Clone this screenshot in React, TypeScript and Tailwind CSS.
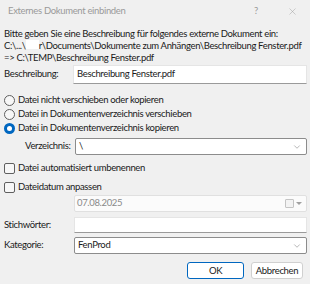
import { ChevronDown, X } from "lucide-react";

function Radio({ checked, label }: { checked?: boolean; label: string }) {
  return (
    <div className="flex h-[14px] items-center gap-[3px]">
      {checked ? (
        <span className="flex h-[11px] w-[11px] items-center justify-center rounded-full bg-[#0067c0]">
          <span className="h-[5px] w-[5px] rounded-full bg-white" />
        </span>
      ) : (
        <span className="h-[11px] w-[11px] rounded-full border border-[#5f5f5f] bg-[#f7f7f7]" />
      )}
      <span>{label}</span>
    </div>
  );
}

function Check({ label }: { label: string }) {
  return (
    <div className="flex h-[14px] items-center gap-[3px]">
      <span className="h-[11px] w-[11px] rounded-[2px] border border-[#5f5f5f] bg-[#f7f7f7]" />
      <span>{label}</span>
    </div>
  );
}

export default function App() {
  return (
    <div className="flex h-[284px] w-[310px] flex-col bg-[#f0f0f0] text-[9.5px] tracking-[-0.34px] text-[#1a1a1a] font-['Lato',sans-serif]">
      <div className="flex h-[22px] items-center pl-[8px] text-[#9a9a9a]">
        <span className="flex-1">Externes Dokument einbinden</span>
        <span className="w-[36px] text-center">?</span>
        <span className="flex w-[36px] justify-center">
          <X size={11} strokeWidth={1} />
        </span>
      </div>

      <div className="flex flex-1 flex-col pl-[4px] pr-[3px]">
        <div className="mt-[6px] leading-[12px]">
          <div className="whitespace-nowrap">Bitte geben Sie eine Beschreibung für folgendes externe Dokument ein:</div>
          <div className="whitespace-nowrap">
            C:\...\<span className="inline-block h-[9px] w-[13px] bg-white" />r\Documents\Dokumente zum Anhängen\Beschreibung Fenster.pdf
          </div>
          <div>=&gt; C:\TEMP\Beschreibung Fenster.pdf</div>
        </div>

        <div className="mt-[1px] flex items-center">
          <span className="w-[69px]">Beschreibung:</span>
          <div className="flex h-[19px] flex-1 items-center border border-[#e5e5e5] border-b-[#9a9a9a] bg-white px-[3px]">
            Beschreibung Fenster.pdf
          </div>
        </div>

        <div className="mt-[9px] flex flex-col">
          <Radio label="Datei nicht verschieben oder kopieren" />
          <Radio label="Datei in Dokumentenverzeichnis verschieben" />
          <Radio checked label="Datei in Dokumentenverzeichnis kopieren" />
        </div>

        <div className="mt-[3px] flex items-center pl-[21px]">
          <span className="w-[50px]">Verzeichnis:</span>
          <div className="flex h-[17px] flex-1 items-center rounded-[2px] border border-[#8c8c8c] bg-white pl-[3px] pr-[4px]">
            <span className="flex-1">\</span>
            <ChevronDown size={10} strokeWidth={1.2} className="text-[#707070]" />
          </div>
        </div>

        <div className="mt-[6px] flex flex-col gap-[5px]">
          <Check label="Datei automatisiert umbenennen" />
          <Check label="Dateidatum anpassen" />
        </div>

        <div className="mt-[1px] flex pl-[70px]">
          <div className="flex h-[17px] flex-1 items-center rounded-[2px] border border-[#e0e0e0] bg-[#fbfbfb] pl-[2px] pr-[4px] text-[#8a8a8a]">
            <span className="flex-1">07.08.2025</span>
            <span className="h-[9px] w-[9px] rounded-[1px] border border-[#c4c4c4] bg-[#f3f3f3]" />
            <span className="ml-[2px] h-0 w-0 border-x-[3px] border-t-[3px] border-x-transparent border-t-[#a0a0a0]" />
          </div>
        </div>

        <div className="mt-[5px] flex items-center">
          <span className="w-[70px]">Stichwörter:</span>
          <div className="h-[16px] flex-1 border border-[#e5e5e5] border-b-[#9a9a9a] bg-white" />
        </div>

        <div className="mt-[4px] flex items-center">
          <span className="w-[70px]">Kategorie:</span>
          <div className="flex h-[17px] flex-1 items-center rounded-[2px] border border-[#8c8c8c] bg-white pl-[3px] pr-[4px]">
            <span className="flex-1">FenProd</span>
            <ChevronDown size={10} strokeWidth={1.2} className="text-[#707070]" />
          </div>
        </div>

        <div className="mt-[8px] flex justify-end gap-[7px] pr-[4px]">
          <button className="h-[17px] w-[57px] rounded-[3px] border border-[#0067c0] bg-white leading-none">
            OK
          </button>
          <button className="h-[17px] w-[52px] rounded-[3px] border border-[#d0d0d0] bg-white leading-none">
            Abbrechen
          </button>
        </div>
      </div>
    </div>
  );
}
